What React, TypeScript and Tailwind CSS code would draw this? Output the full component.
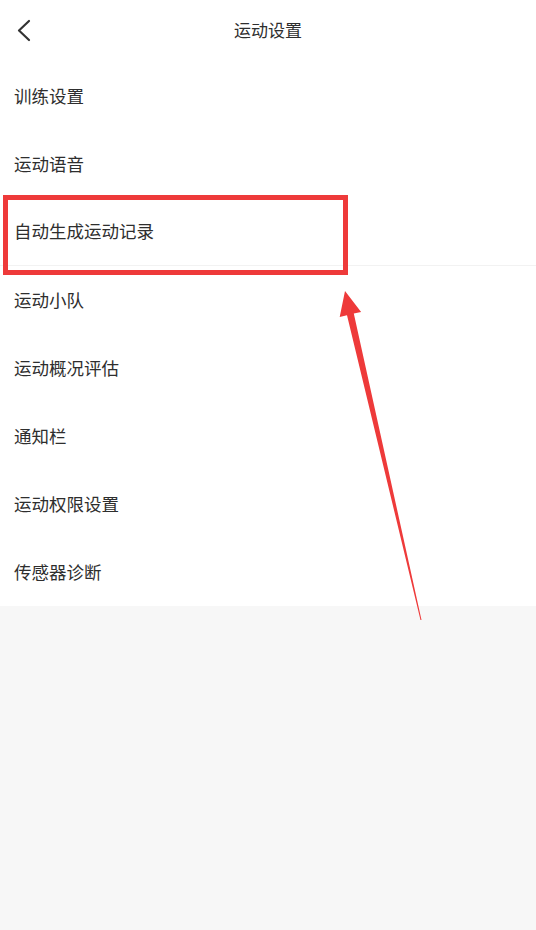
import React from 'react';

const items = ['训练设置', '运动语音', '自动生成运动记录', '运动小队', '运动概况评估', '通知栏', '运动权限设置', '传感器诊断'];

export default function App() {
  return (
    <div
      className="relative min-h-[930px] w-full bg-[#f7f7f7] text-[#2e2e2e]"
      style={{ fontFamily: '"Noto Sans CJK SC", "Noto Sans", sans-serif' }}
    >
      {/* Header */}
      <div className="relative flex h-[62px] items-center justify-center bg-white pb-[3px]">
        <svg className="absolute left-0 top-0" width="48" height="62" viewBox="0 0 48 62">
          <polyline points="29,21 19,30.5 29,40" fill="none" stroke="#333" strokeWidth="2.2" strokeLinecap="round" strokeLinejoin="round" />
        </svg>
        <span className="text-[17px] leading-none">运动设置</span>
      </div>

      {/* List */}
      <div className="bg-white">
        {items.map((t, i) => (
          <div
            key={t}
            className={`flex h-[68px] items-center px-[14px] text-[17.5px] ${i === 2 ? 'border-b border-[#f2f2f2]' : ''}`}
          >
            {t}
          </div>
        ))}
      </div>

      {/* Annotation box */}
      <div className="pointer-events-none absolute left-[3px] top-[195px] h-[80px] w-[345px] border-[5px] border-[#ee3a3a]" />

      {/* Annotation arrow */}
      <svg className="pointer-events-none absolute left-0 top-0" width="536" height="930" viewBox="0 0 536 930">
        <polygon
          points="345,291 361.1,311.9 353.8,313.6 421.5,620 420.5,620 347,315.2 339.7,316.9"
          fill="#ee3a3a"
        />
      </svg>
    </div>
  );
}
